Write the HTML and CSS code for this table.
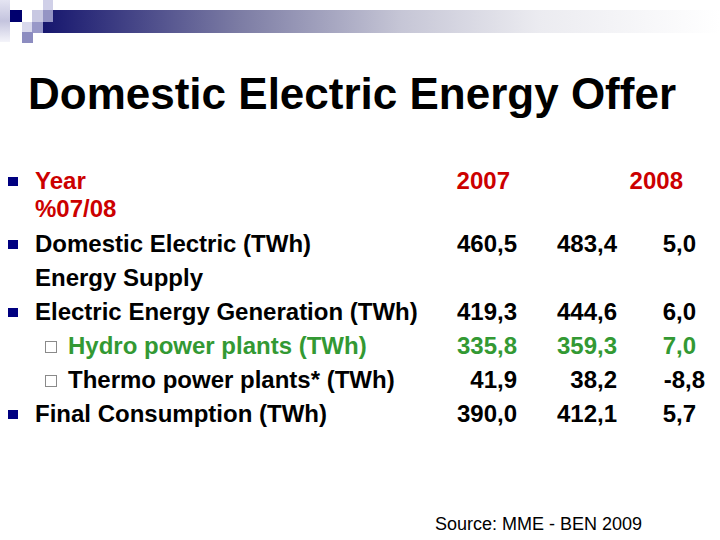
FILE: index.html
```html
<!DOCTYPE html>
<html>
<head>
<meta charset="utf-8">
<link rel="stylesheet" href="styles.css">
</head>
<body>
<div class="slide">
  <header class="deco">
    <svg width="720" height="44" viewBox="0 0 720 44">
      <defs>
        <linearGradient id="bar" x1="43" y1="0" x2="720" y2="0" gradientUnits="userSpaceOnUse">
          <stop offset="0" stop-color="#16166e"/>
          <stop offset="0.29" stop-color="#7c7ca4"/>
          <stop offset="0.53" stop-color="#c6c6d6"/>
          <stop offset="0.73" stop-color="#ebebf0"/>
          <stop offset="1" stop-color="#ffffff"/>
        </linearGradient>
        <linearGradient id="side" x1="0" y1="0" x2="0" y2="1">
          <stop offset="0" stop-color="#e4e4f2"/>
          <stop offset="0.5" stop-color="#c4c4de"/>
          <stop offset="1" stop-color="#f4f4fa"/>
        </linearGradient>
      </defs>
      <rect x="0" y="0" width="10" height="42" fill="url(#side)"/>
      <rect x="43" y="10" width="677" height="23" fill="url(#bar)"/>
      <rect x="10" y="10" width="12" height="12" fill="#00006e"/>
      <rect x="32" y="10" width="11" height="12" fill="#c8c8e2"/>
      <rect x="43" y="0" width="10" height="10" fill="#d0d0e8"/>
      <rect x="43" y="10" width="10" height="12" fill="#9494c4"/>
      <rect x="22" y="22" width="10" height="10" fill="#d8d8ec"/>
      <rect x="32" y="22" width="11" height="11" fill="#9898c8"/>
      <rect x="22" y="32" width="11" height="11" fill="#8c8cc0"/>
    </svg>
  </header>

  <h1 class="title">Domestic Electric Energy Offer</h1>

  <div class="rows">
    <div class="row row-year red">
      <div class="mark"><span class="bullet"></span></div>
      <div class="label">Year<br>%07/08</div>
      <div class="num n-2007">2007</div>
      <div class="num"></div>
      <div class="num n-2008">2008</div>
    </div>
    <div class="row row-dom">
      <div class="mark"><span class="bullet"></span></div>
      <div class="label">Domestic Electric (TWh)<br>Energy Supply</div>
      <div class="num">460,5</div>
      <div class="num">483,4</div>
      <div class="num">5,0</div>
    </div>
    <div class="row">
      <div class="mark"><span class="bullet"></span></div>
      <div class="label">Electric Energy Generation (TWh)</div>
      <div class="num">419,3</div>
      <div class="num">444,6</div>
      <div class="num">6,0</div>
    </div>
    <div class="row green">
      <div class="mark"></div>
      <div class="label sub"><span class="box"></span>Hydro power plants (TWh)</div>
      <div class="num">335,8</div>
      <div class="num">359,3</div>
      <div class="num">7,0</div>
    </div>
    <div class="row">
      <div class="mark"></div>
      <div class="label sub"><span class="box"></span>Thermo power plants* (TWh)</div>
      <div class="num">41,9</div>
      <div class="num">38,2</div>
      <div class="num neg">-8,8</div>
    </div>
    <div class="row row-final">
      <div class="mark"><span class="bullet"></span></div>
      <div class="label">Final Consumption (TWh)</div>
      <div class="num">390,0</div>
      <div class="num">412,1</div>
      <div class="num">5,7</div>
    </div>
  </div>

  <footer class="source">Source: MME - BEN 2009</footer>
</div>
</body>
</html>
```

FILE: styles.css
```css
html, body {
  margin: 0;
  padding: 0;
  background: #ffffff;
}

.slide {
  width: 720px;
  height: 540px;
  display: flex;
  flex-direction: column;
  font-family: "Liberation Sans", Arial, sans-serif;
  color: #000000;
  overflow: hidden;
}

.deco {
  height: 44px;
  line-height: 0;
}

.title {
  margin: 25px 0 0 0;
  padding-left: 28px;
  font-size: 44px;
  font-weight: bold;
  line-height: 50px;
  height: 50px;
}

.rows {
  margin-top: 48px;
  display: flex;
  flex-direction: column;
  font-size: 24px;
  font-weight: bold;
}

.row {
  display: grid;
  grid-template-columns: 35px 405px 77px 100px 79px;
  line-height: 34px;
  align-items: start;
}

.row-year {
  line-height: 28px;
}

.row-dom {
  margin-top: 4px;
}

.red {
  color: #cc0000;
}

.green {
  color: #339933;
}

.mark {
  padding-left: 8px;
}

.bullet {
  display: inline-block;
  width: 10px;
  height: 9px;
  background: #000080;
  vertical-align: 3px;
}

.label {
  white-space: nowrap;
}

.sub {
  padding-left: 10px;
}

.box {
  display: inline-block;
  box-sizing: border-box;
  width: 12px;
  height: 12px;
  border: 1px solid #8a8a8a;
  background: #ffffff;
  margin-right: 11px;
  vertical-align: 1px;
}

.num {
  text-align: right;
  white-space: nowrap;
}

.n-2007 {
  padding-right: 7px;
}

.n-2008 {
  padding-right: 13px;
}

.neg {
  margin-right: -9px;
}

.source {
  margin-top: auto;
  padding: 0 0 6px 435px;
  font-size: 18px;
  line-height: 20px;
  font-weight: normal;
}
```
